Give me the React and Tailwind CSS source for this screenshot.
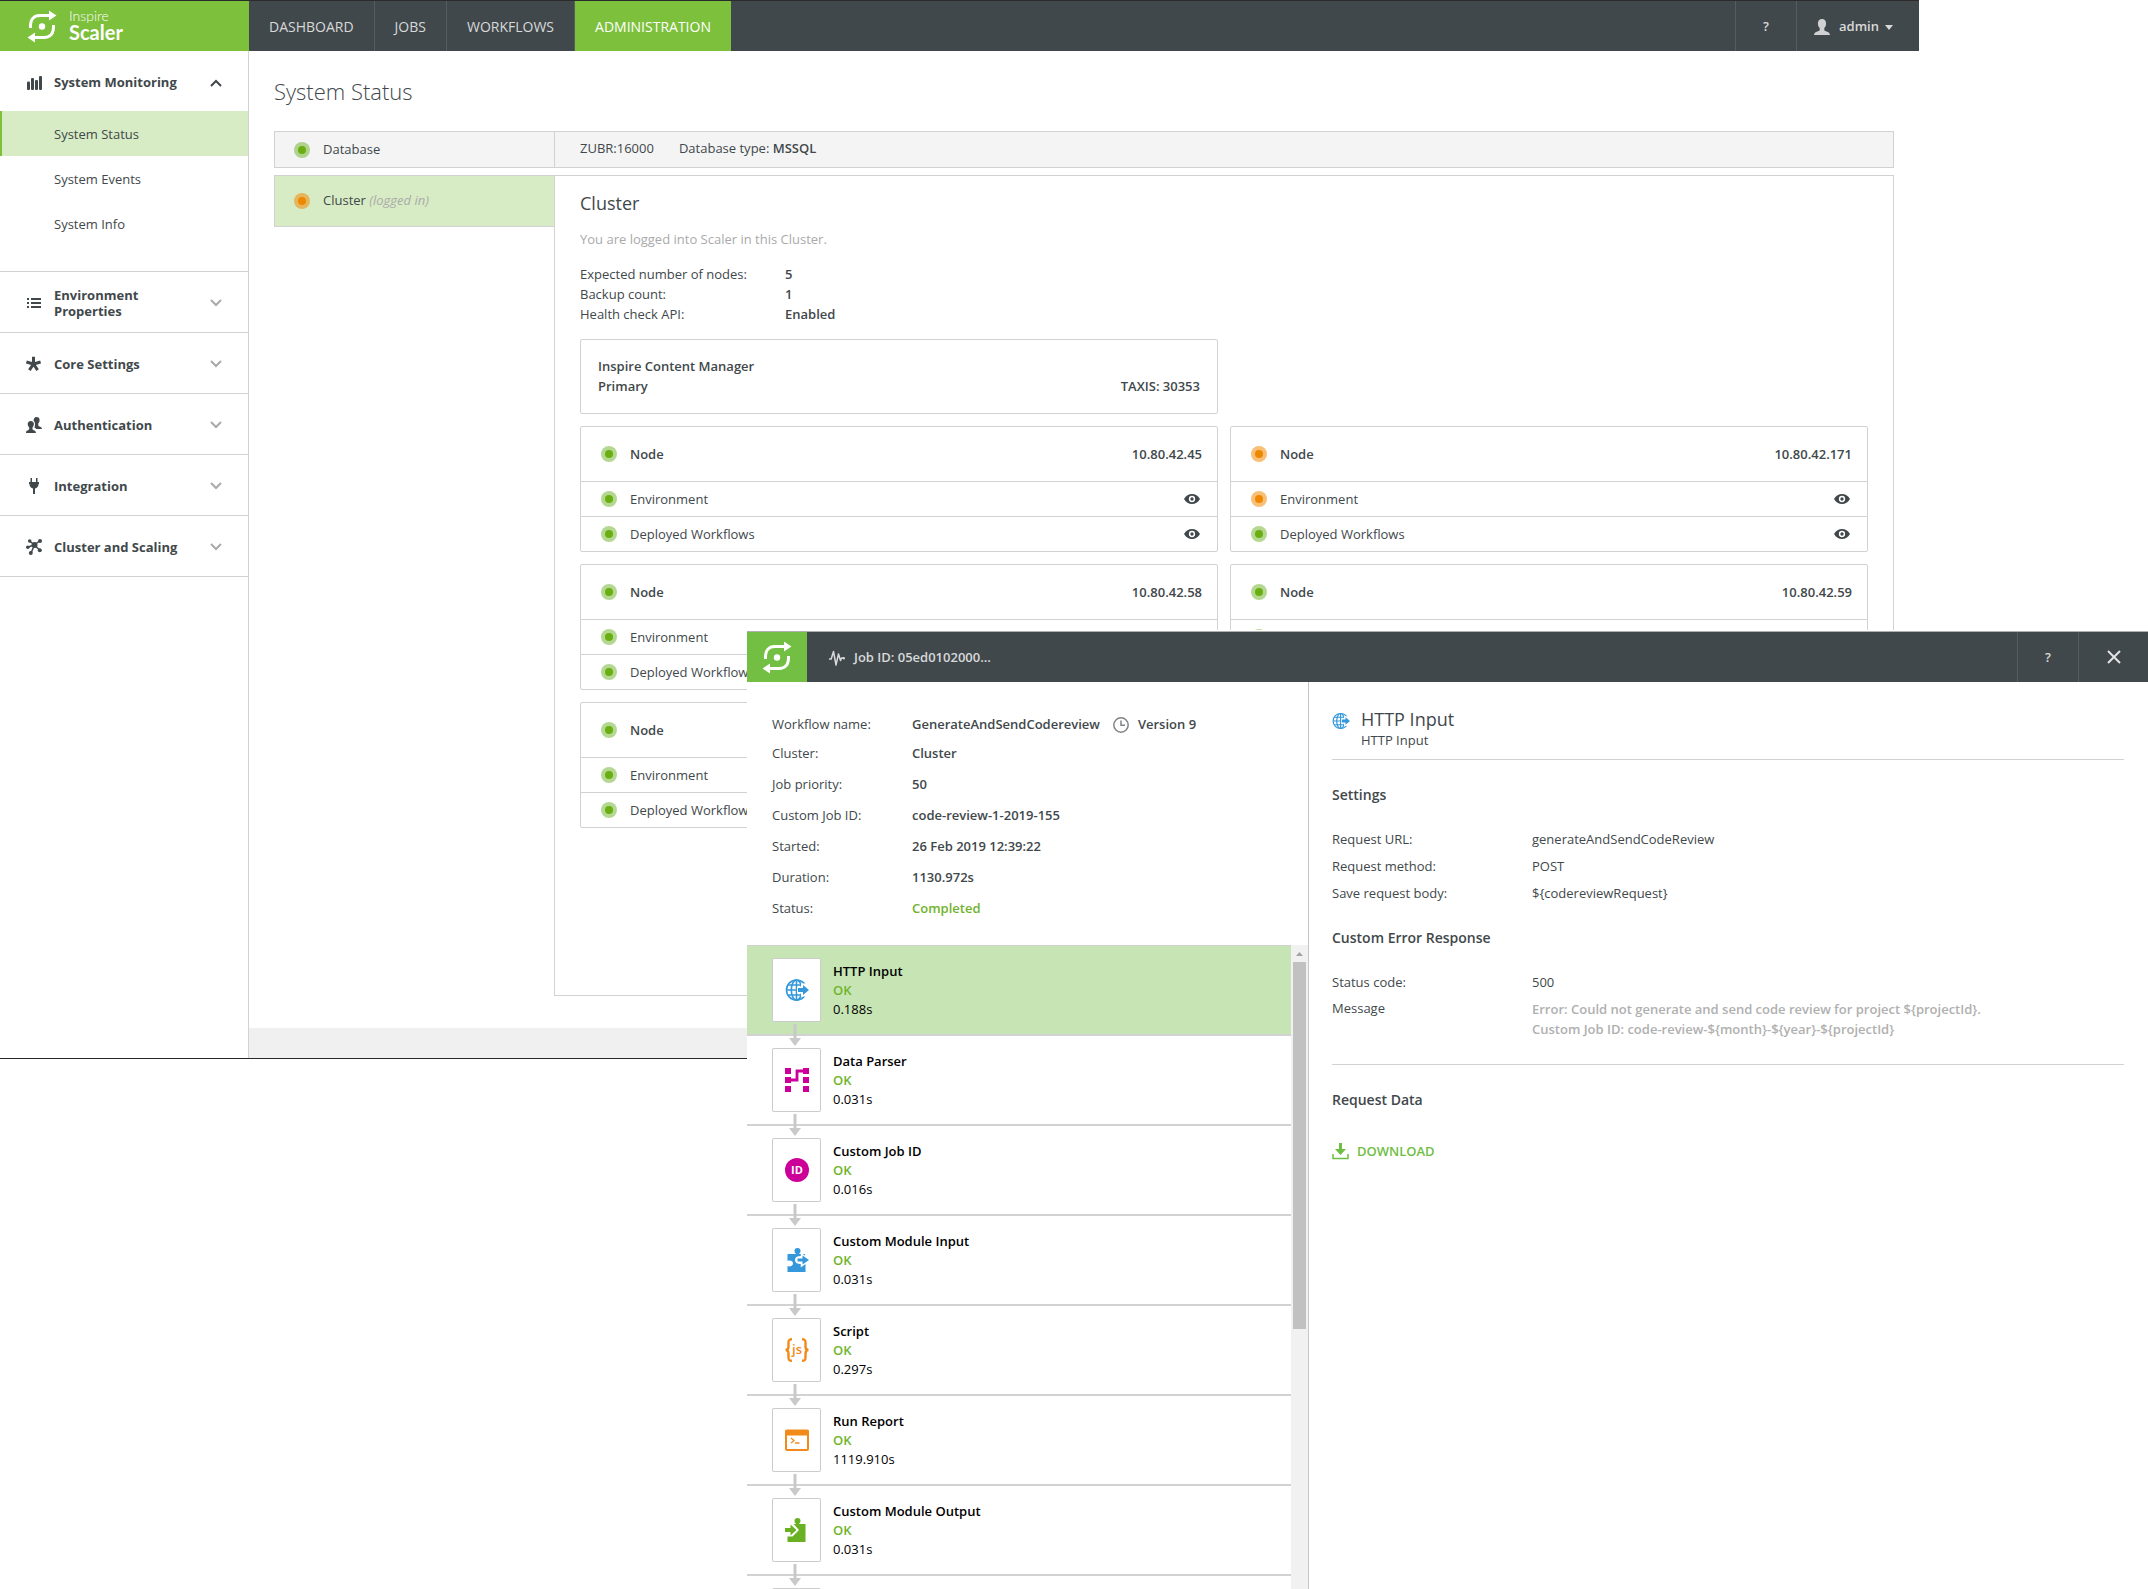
import React, { useState } from 'react';

const navItems = ['DASHBOARD', 'JOBS', 'WORKFLOWS', 'ADMINISTRATION'];

const monitoringPages = ['System Status', 'System Events', 'System Info'];

const nodes = [
  { id: 1, ip: '10.80.42.45', node: 'ok', environment: 'ok', workflows: 'ok' },
  { id: 2, ip: '10.80.42.171', node: 'warning', environment: 'warning', workflows: 'ok' },
  { id: 3, ip: '10.80.42.58', node: 'ok', environment: 'ok', workflows: 'ok' },
  { id: 4, ip: '10.80.42.59', node: 'ok', environment: 'ok', workflows: 'ok' },
  { id: 5, ip: '', node: 'ok', environment: 'ok', workflows: 'ok' },
];

const LogoIcon = () => (
  <svg width="30" height="33" viewBox="0 0 30 33" fill="none" stroke="#fff" strokeWidth="3" aria-hidden="true">
    <path d="M3.5 18C3 9 7 5.5 13 5.5H23" />
    <path d="M26.5 15C27 24 23 27.5 17 27.5H7" />
    <path d="M22 0.5L29.5 5.5L22 10.5Z M8 22.5L0.5 27.5L8 32.5Z" fill="#fff" stroke="none" />
    <circle cx="15" cy="16.500" r="3.2" fill="#fff" stroke="none" />
  </svg>
);

const BarsIcon = () => (
  <svg width="16" height="16" viewBox="0 0 16 16" fill="#41484b" aria-hidden="true">
    <rect x="1" y="6.500" width="3" height="8.500" rx="1" />
    <rect x="5" y="3" width="3" height="12" rx="1" />
    <rect x="9" y="5" width="3" height="10" rx="1" />
    <rect x="13" y="1" width="3" height="14" rx="1" />
  </svg>
);

const ListIcon = () => (
  <svg width="16" height="16" viewBox="0 0 16 16" fill="#41484b" aria-hidden="true">
    <path d="M1 3h2v2H1z M5 3h10v2H5z M1 7h2v2H1z M5 7h10v2H5z M1 11h2v2H1z M5 11h10v2H5z" />
  </svg>
);

const AsteriskIcon = () => (
  <svg width="16" height="16" viewBox="0 0 16 16" stroke="#41484b" strokeWidth="3" aria-hidden="true">
    <path d="M7.500 8V0.8M7.500 8L14.600 6M7.500 8L11.600 14.200M7.500 8L3.400 14.200M7.500 8L0.400 6" />
  </svg>
);

const UsersIcon = () => (
  <svg width="16" height="16" viewBox="0 0 16 16" fill="#41484b" aria-hidden="true">
    <path d="M10.500 0C12.500 0 13.600 1.300 13.600 3C13.600 4.500 13 5.600 12.300 6.200V8.400C12.600 9.600 16 9.400 16 12H10.200C9.800 11.200 9 10.800 8.300 10.600C8.900 9.600 9.200 8.200 8.900 6.500C8.700 5 8.300 4.300 7.600 3.700C7.600 1.500 8.700 0 10.500 0Z" />
    <path d="M4.800 4C6.900 4 7.900 5.400 7.900 7.100C7.900 8.600 7.200 9.700 6.500 10.400V12.200C6.900 13.300 9.900 13 9.900 16H0C0 13 2.700 13.300 3.200 12.200V10.400C2.500 9.700 1.700 8.600 1.700 7.100C1.700 5.400 2.700 4 4.800 4Z" />
  </svg>
);

const PlugIcon = () => (
  <svg width="16" height="16" viewBox="0 0 16 16" fill="#41484b" aria-hidden="true">
    <path d="M4.500 0H6V4H10V0H11.500V4H13V6H12.500C12.500 8.500 11 10 9 10.500V16H7V10.500C5 10 3.500 8.500 3.500 6H3V4H4.500Z" />
  </svg>
);

const ClusterIcon = () => (
  <svg width="16" height="16" viewBox="0 0 16 16" fill="#41484b" stroke="#41484b" aria-hidden="true">
    <path d="M8.500 6L3.500 2M8.500 6L13.500 2M8.500 6L2 8M8.500 6L13.500 11M8.500 6L5 14" strokeWidth="1.500" />
    <g stroke="none">
      <circle cx="8.500" cy="6" r="3" />
      <circle cx="3.700" cy="2" r="1.800" />
      <circle cx="14" cy="2" r="2" />
      <circle cx="1.800" cy="8.200" r="1.800" />
      <circle cx="13.800" cy="11.200" r="2" />
      <circle cx="4.800" cy="14" r="2" />
    </g>
  </svg>
);

const Chevron = ({ up }) => (
  <svg width="12" height="8" viewBox="0 0 12 8" fill="none" strokeWidth="2" stroke={up ? '#41484b' : '#aaaaaa'} aria-hidden="true">
    <path d={up ? 'M1 7L6 2L11 7' : 'M1 1L6 6L11 1'} />
  </svg>
);

const UserIcon = () => (
  <svg width="16" height="16" viewBox="0 0 16 16" fill="#cfd1d2" aria-hidden="true">
    <path d="M8 0C10.700 0 12.100 1.900 12.100 4.400C12.100 6.400 11.300 8 10.300 9V11.200C11 12.500 16 12.500 16 16H0C0 12.500 5 12.500 5.700 11.200V9C4.700 8 3.900 6.400 3.900 4.400C3.900 1.900 5.300 0 8 0Z" />
  </svg>
);

const EyeIcon = () => (
  <svg width="16" height="10" viewBox="0 0 16 10" aria-hidden="true">
    <path d="M0 5C2 1.600 4.700 0 8 0C11.300 0 14 1.600 16 5C14 8.400 11.300 10 8 10C4.700 10 2 8.400 0 5Z" fill="#41484b" />
    <circle cx="8" cy="5" r="2.400" fill="none" stroke="#fff" strokeWidth="1.500" />
  </svg>
);

const PulseIcon = () => (
  <svg width="16" height="16" viewBox="0 0 16 16" fill="none" stroke="#d7d9da" strokeWidth="1.500" strokeLinejoin="round" aria-hidden="true">
    <path d="M0 9H2.200L4.500 1.500L7 15L9.500 4L11.500 10.500L12.500 8H15" />
    <circle cx="14.800" cy="8.200" r="1.200" fill="#d7d9da" stroke="none" />
  </svg>
);

const ClockIcon = () => (
  <svg width="16" height="16" viewBox="0 0 16 16" fill="none" stroke="#808487" strokeWidth="1.500" aria-hidden="true">
    <circle cx="8" cy="8" r="7.200" />
    <path d="M8 3.500V8.300H12" />
  </svg>
);

const GlobeIcon = ({ size }) => (
  <svg width={size} height={size} viewBox="0 0 24 24" fill="none" stroke="#3498db" strokeWidth="1.600" aria-hidden="true">
    <circle cx="11.500" cy="12" r="10" />
    <ellipse cx="11.500" cy="12" rx="5.200" ry="10" />
    <path d="M11.500 2V22M1.500 12H21.500M3 7H20M3 17H20" />
    <path d="M12 8.800H16V5.500H24V18.500H16V15.200H12Z" fill="#fff" stroke="none" />
    <path d="M13 10H18V7L24 12L18 17V14H13Z" fill="#3498db" stroke="none" />
  </svg>
);

const ParserIcon = () => (
  <svg width="24" height="24" viewBox="0 0 24 24" fill="#cc0099" aria-hidden="true">
    <path d="M0 0h6v6H0z M0 9h6v6H0z M0 18h6v6H0z M18 0h6v6H18z M18 9h6v6H18z M18 18h6v6H18z" />
    <path d="M6 12H12V3H18" fill="none" stroke="#cc0099" strokeWidth="2.800" />
  </svg>
);

const JobIdIcon = () => (
  <svg width="24" height="24" viewBox="0 0 24 24" aria-hidden="true">
    <circle cx="12" cy="12" r="12" fill="#cc0099" />
    <text x="12" y="16" textAnchor="middle" fill="#fff" fontSize="11" fontWeight="700" fontFamily="Open Sans, sans-serif">ID</text>
  </svg>
);

const ModuleInputIcon = () => (
  <svg width="24" height="24" viewBox="0 0 24 24" fill="#3498db" aria-hidden="true">
    <circle cx="12.500" cy="3" r="3" />
    <path d="M11 4H14V6H20V8H15.500C12 8 10 9.500 10 12C10 14.500 12 16 15.500 16H20.500V24H2.500V18C4 18.800 8 18.600 8 15.500C8 12.500 4.500 12 2.500 13V6H11Z" />
    <path d="M17 7L24 12L17 17Z" fill="#fff" stroke="#fff" strokeWidth="2.500" />
    <path d="M24 12L17.500 7.500V10.500H12.500V13.500H17.500V16.500Z" />
  </svg>
);

const ModuleOutputIcon = () => (
  <svg width="24" height="24" viewBox="0 0 24 24" fill="#6ab023" aria-hidden="true">
    <circle cx="12.500" cy="3" r="3" />
    <path d="M11 4H14V6H20.500V24H2.500V18.500H7.500L14 12L8.500 6H11Z" />
    <path d="M11.500 12L5.500 6.500V10H0V14H5.500V17.500Z" />
  </svg>
);

const ScriptIcon = () => (
  <svg width="24" height="24" viewBox="0 0 24 24" fill="none" stroke="#f28a1a" strokeWidth="2.400" aria-hidden="true">
    <path d="M7 1.200C4 1.200 3.500 2 3.500 4.500V8.500C3.500 10.800 2.500 12 0.500 12C2.500 12 3.500 13.200 3.500 15.500V19.500C3.500 22 4 22.800 7 22.800" />
    <path d="M17 1.200C20 1.200 20.500 2 20.500 4.500V8.500C20.500 10.800 21.500 12 23.500 12C21.500 12 20.500 13.200 20.500 15.500V19.500C20.500 22 20 22.800 17 22.800" />
    <text x="12" y="16" textAnchor="middle" fill="#f28a1a" stroke="none" fontSize="13" fontWeight="600" fontFamily="Open Sans, sans-serif">js</text>
  </svg>
);

const ReportIcon = () => (
  <svg width="24" height="24" viewBox="0 0 24 24" aria-hidden="true">
    <rect x="1" y="2.500" width="22" height="19.500" rx="1" fill="#fff" stroke="#f28a1a" strokeWidth="2" />
    <rect x="0.500" y="2" width="23" height="5.500" fill="#f28a1a" />
    <path d="M6 10L9 12.500L6 15M10 15H14.500" fill="none" stroke="#f28a1a" strokeWidth="1.300" />
  </svg>
);

const DownloadIcon = () => (
  <svg width="17" height="17" viewBox="0 0 17 17" fill="#6ebe44" aria-hidden="true">
    <path d="M7 0H10V6H14L8.500 12L3 6H7Z" />
    <path d="M1 11V15.500H16V11" fill="none" stroke="#6ebe44" strokeWidth="1.500" />
  </svg>
);

const StepArrow = () => (
  <svg width="14" height="22" viewBox="0 0 14 22" fill="#c9c9c9" aria-hidden="true">
    <path d="M5.500 0H8.500V14H13L7 22L1 14H5.500Z" />
  </svg>
);

const sections = [
  { name: 'Environment Properties', Icon: ListIcon },
  { name: 'Core Settings', Icon: AsteriskIcon },
  { name: 'Authentication', Icon: UsersIcon },
  { name: 'Integration', Icon: PlugIcon },
  { name: 'Cluster and Scaling', Icon: ClusterIcon },
];

const jobDetails = [
  ['Cluster:', 'Cluster'],
  ['Job priority:', '50'],
  ['Custom Job ID:', 'code-review-1-2019-155'],
  ['Started:', '26 Feb 2019 12:39:22'],
  ['Duration:', '1130.972s'],
];

const steps = [
  { name: 'HTTP Input', time: '0.188s', icon: <GlobeIcon size={24} /> },
  { name: 'Data Parser', time: '0.031s', icon: <ParserIcon /> },
  { name: 'Custom Job ID', time: '0.016s', icon: <JobIdIcon /> },
  { name: 'Custom Module Input', time: '0.031s', icon: <ModuleInputIcon /> },
  { name: 'Script', time: '0.297s', icon: <ScriptIcon /> },
  { name: 'Run Report', time: '1119.910s', icon: <ReportIcon /> },
  { name: 'Custom Module Output', time: '0.031s', icon: <ModuleOutputIcon /> },
];

function StatusDot({ status }) {
  const ring = status === 'ok' ? 'bg-[#6ab023]/50' : 'bg-[#f08a0a]/55';
  const core = status === 'ok' ? 'bg-[#6aae12]' : 'bg-[#ee8800]';
  return (
    <span className={`flex size-4 shrink-0 items-center justify-center rounded-full ${ring}`}>
      <span className={`size-2 rounded-full ${core}`} />
    </span>
  );
}

function TopBar() {
  return (
    <header className="flex h-[51px] border-t border-[#2b2b2b] bg-[#41484b]">
      <a href="#home" className="flex w-[249px] shrink-0 items-center gap-3 bg-[#7dc03c] pl-[27px] text-white">
        <LogoIcon />
        <span className="flex flex-col pb-1 font-['Lato',sans-serif]">
          <span className="text-sm leading-4 font-light">Inspire</span>
          <span className="text-xl leading-4 font-bold">Scaler</span>
        </span>
      </a>
      <nav className="flex text-sm text-[#d7d9da]">
        {navItems.map((item) => (
          <a
            key={item}
            href={`#${item.toLowerCase()}`}
            className={
              item === 'ADMINISTRATION'
                ? 'flex items-center bg-[#7dc03c] px-5 pt-0.5 text-white'
                : 'flex items-center border-r border-[#565d60] px-5 pt-0.5'
            }
          >
            {item}
          </a>
        ))}
      </nav>
      <div className="ml-auto flex text-[13px] font-semibold text-[#d7d9da]">
        <button type="button" className="w-[61px] border-l border-[#565d60] pt-0.5">?</button>
        <button type="button" className="flex w-[123px] items-center border-l border-[#565d60] pt-0.5 pl-[17px]">
          <UserIcon />
          <span className="ml-[9px]">admin</span>
          <svg width="8" height="5" viewBox="0 0 8 5" fill="#d7d9da" className="ml-[6px]" aria-hidden="true">
            <path d="M0 0H8L4 5Z" />
          </svg>
        </button>
      </div>
    </header>
  );
}

function Sidebar() {
  return (
    <aside className="w-[249px] shrink-0 border-r border-[#d2d2d2] font-bold">
      <div className="border-b border-[#d2d2d2] pb-[25px]">
        <button type="button" className="flex h-[60px] w-full items-center px-[26px] pt-[3px] text-left">
          <BarsIcon />
          <span className="ml-3 flex-1">System Monitoring</span>
          <Chevron up />
        </button>
        {monitoringPages.map((page, i) => (
          <a
            key={page}
            href="#page"
            className={
              i === 0
                ? 'flex h-[45px] items-center border-l-2 border-[#7dc03c] bg-[#d7ecc4] pt-0.5 pl-[52px] font-normal'
                : 'flex h-[45px] items-center pt-0.5 pl-[54px] font-normal'
            }
          >
            {page}
          </a>
        ))}
      </div>
      {sections.map(({ name, Icon }) => (
        <button
          key={name}
          type="button"
          className="flex h-[61px] w-full items-center border-b border-[#d2d2d2] px-[26px] pt-0.5 text-left leading-4"
        >
          <Icon />
          <span className="ml-3 flex-1 pr-8">{name}</span>
          <Chevron />
        </button>
      ))}
    </aside>
  );
}

function NodeCard({ data }) {
  return (
    <section className="rounded-[2px] border border-[#d2d2d2]">
      <div className="flex h-[54px] items-center gap-[13px] pr-[15px] pl-5 font-semibold">
        <StatusDot status={data.node} />
        <span className="flex-1 pt-0.5">Node</span>
        <span className="pt-0.5">{data.ip}</span>
      </div>
      <div className="flex h-[35px] items-center gap-[13px] border-t border-[#d2d2d2] pr-[17px] pl-5">
        <StatusDot status={data.environment} />
        <span className="flex-1 pt-0.5">Environment</span>
        <button type="button" aria-label="Show environment"><EyeIcon /></button>
      </div>
      <div className="flex h-[35px] items-center gap-[13px] border-t border-[#d2d2d2] pr-[17px] pl-5">
        <StatusDot status={data.workflows} />
        <span className="flex-1 pt-0.5">Deployed Workflows</span>
        <button type="button" aria-label="Show deployed workflows"><EyeIcon /></button>
      </div>
    </section>
  );
}

function SystemStatus() {
  return (
    <main className="flex flex-1 flex-col">
      <div className="pr-[25px] pb-8 pl-[25px]">
        <h1 className="py-[26px] text-[22px] leading-7 font-light">System Status</h1>
        <div className="flex h-[37px] border border-[#d2d2d2] bg-[#f4f4f4]">
          <div className="flex w-[280px] shrink-0 items-center gap-[13px] border-r border-[#d2d2d2] pl-[19px]">
            <StatusDot status="ok" />
            Database
          </div>
          <div className="flex items-center gap-[25px] pb-0.5 pl-[25px]">
            <span>ZUBR:16000</span>
            <span>Database type: <b className="font-semibold">MSSQL</b></span>
          </div>
        </div>
        <div className="mt-[7px] flex items-start">
          <a href="#cluster" className="flex h-[52px] w-[280px] shrink-0 items-center gap-[13px] border border-r-0 border-[#d2d2d2] bg-[#d7ecc4] pl-[19px]">
            <StatusDot status="warning" />
            <span>Cluster <i className="text-[#aaaaaa]">(logged in)</i></span>
          </a>
          <div className="flex-1 border border-[#d2d2d2] px-[25px] pt-[15px] pb-[167px]">
            <h2 className="text-lg leading-6">Cluster</h2>
            <p className="mt-[14px] leading-5 text-[#aaaaaa]">You are logged into Scaler in this Cluster.</p>
            <dl className="mt-[15px] grid grid-cols-[205px_1fr] leading-5">
              <dt>Expected number of nodes:</dt>
              <dd className="font-semibold">5</dd>
              <dt>Backup count:</dt>
              <dd className="font-semibold">1</dd>
              <dt>Health check API:</dt>
              <dd className="font-semibold">Enabled</dd>
            </dl>
            <div className="mt-[15px] grid grid-cols-2 gap-3">
              <section className="flex h-[75px] items-start justify-between rounded-[2px] border border-[#d2d2d2] px-[17px] pt-4 leading-5 font-semibold">
                <div>
                  <p>Inspire Content Manager</p>
                  <p>Primary</p>
                </div>
                <p className="pt-5">TAXIS: 30353</p>
              </section>
              <div />
              {nodes.map((n) => (
                <NodeCard key={n.id} data={n} />
              ))}
            </div>
          </div>
        </div>
      </div>
      <div className="h-[30px] bg-[#f0f0f0]" />
    </main>
  );
}

function StepList({ selected, onSelect }) {
  return (
    <div className="flex min-h-0 flex-1">
      <ol className="flex-1 overflow-hidden border-t border-[#d2d2d2] text-black">
        {steps.map((step, i) => (
          <li key={step.name} className="relative">
            <button
              type="button"
              onClick={() => onSelect(i)}
              className={`flex h-[90px] w-full border-b-2 border-[#d2d2d2] pt-3 pl-[25px] text-left ${i === selected ? 'bg-[#c7e5b4]' : ''}`}
            >
              <span className="flex h-16 w-[49px] items-center justify-center rounded-[2px] border border-black/20 bg-white">
                {step.icon}
              </span>
              <span className="ml-3 flex flex-col pt-1 leading-[19px]">
                <span className="font-semibold">{step.name}</span>
                <span className="font-semibold text-[#6fb42c]">OK</span>
                <span>{step.time}</span>
              </span>
            </button>
            {/* connector to the next step, drawn across the separator */}
            <span className="absolute top-[78px] left-[41px] z-10"><StepArrow /></span>
          </li>
        ))}
        <li className="pt-3 pl-[25px]">
          <span className="block h-16 w-[49px] rounded-[2px] border border-black/20" />
        </li>
      </ol>
      <div className="flex w-[17px] flex-col items-center bg-[#f1f1f1]">
        <svg width="17" height="17" viewBox="0 0 17 17" fill="#a3a3a3" aria-hidden="true">
          <path d="M5 11L8.500 7L12 11Z" />
        </svg>
        <div className="h-[57%] w-[13px] bg-[#c1c1c1]" />
      </div>
    </div>
  );
}

function JobDetails() {
  return (
    <section className="flex flex-col pt-6 pr-6 pl-[23px]">
      <header className="flex gap-[11px] border-b border-[#d2d2d2]">
        <span className="pt-[6px]"><GlobeIcon size={18} /></span>
        <div>
          <h2 className="text-lg leading-[27px]">HTTP Input</h2>
          <p className="pb-3 leading-[14px]">HTTP Input</p>
        </div>
      </header>
      <h3 className="mt-[25px] text-sm leading-5 font-semibold">Settings</h3>
      <dl className="mt-[21px] grid grid-cols-[200px_1fr] leading-[27px]">
        <dt>Request URL:</dt>
        <dd>generateAndSendCodeReview</dd>
        <dt>Request method:</dt>
        <dd>POST</dd>
        <dt>Save request body:</dt>
        <dd>{'${codereviewRequest}'}</dd>
      </dl>
      <h3 className="mt-[21px] text-sm leading-5 font-semibold">Custom Error Response</h3>
      <dl className="mt-[21px] grid grid-cols-[200px_1fr] leading-[27px]">
        <dt>Status code:</dt>
        <dd>500</dd>
        <dt className="leading-6">Message</dt>
        <dd className="pt-[3px] leading-5 font-semibold text-[#b0b0b0]">
          <p>{'Error: Could not generate and send code review for project ${projectId}.'}</p>
          <p>{'Custom Job ID: code-review-${month}-${year}-${projectId}'}</p>
        </dd>
      </dl>
      <div className="mt-[25px] border-t border-[#d2d2d2] pt-[25px]">
        <h3 className="text-sm leading-5 font-semibold">Request Data</h3>
        <a href="#download" className="mt-8 inline-flex items-center gap-2 font-semibold text-[#6ebe44]">
          <DownloadIcon />
          DOWNLOAD
        </a>
      </div>
    </section>
  );
}

function JobWindow() {
  const [selected, setSelected] = useState(0);

  return (
    <div className="absolute top-[630px] right-0 bottom-0 left-[747px] z-20 flex flex-col overflow-hidden border-t border-white bg-white">
      <header className="flex h-[51px] shrink-0 items-stretch border-t border-[#b0b0b0] bg-[#41484b] text-[13px] font-semibold text-[#d7d9da]">
        <a href="#home" aria-label="Home" className="flex w-[60px] items-center justify-center bg-[#73bf44]">
          <LogoIcon />
        </a>
        <h2 className="flex items-center gap-[9px] pt-0.5 pl-[22px]">
          <PulseIcon />
          Job ID: 05ed0102000...
        </h2>
        <button type="button" className="ml-auto w-[61px] border-l border-[#565d60] pt-0.5">?</button>
        <button type="button" aria-label="Close" className="flex w-[70px] items-center justify-center border-l border-[#565d60]">
          <svg width="14" height="14" viewBox="0 0 14 14" stroke="#e3e4e5" strokeWidth="2" aria-hidden="true">
            <path d="M1 1L13 13M13 1L1 13" />
          </svg>
        </button>
      </header>
      <div className="grid min-h-0 flex-1 grid-cols-[562px_1fr]">
        <section className="flex min-h-0 flex-col border-r border-[#c6c6c6]">
          <dl className="grid grid-cols-[140px_1fr] pt-[29px] pb-[21px] pl-[25px] leading-[31px]">
            <dt className="leading-[27px]">Workflow name:</dt>
            <dd className="flex items-center leading-[27px] font-semibold">
              <span>GenerateAndSendCodereview</span>
              <span className="mr-[9px] ml-[13px]"><ClockIcon /></span>
              <span>Version 9</span>
            </dd>
            {jobDetails.map(([label, value]) => (
              <React.Fragment key={label}>
                <dt>{label}</dt>
                <dd className="font-semibold">{value}</dd>
              </React.Fragment>
            ))}
            <dt>Status:</dt>
            <dd className="font-semibold text-[#6fb42c]">Completed</dd>
          </dl>
          <StepList selected={selected} onSelect={setSelected} />
        </section>
        <JobDetails />
      </div>
    </div>
  );
}

function App() {
  return (
    <div className="relative min-h-screen bg-white font-['Open_Sans',sans-serif] text-[13px] text-[#41484b]">
      <div className="mr-[229px] border-b border-[#26282a]">
        <TopBar />
        <div className="flex">
          <Sidebar />
          <SystemStatus />
        </div>
      </div>
      <JobWindow />
    </div>
  );
}

export default App;
